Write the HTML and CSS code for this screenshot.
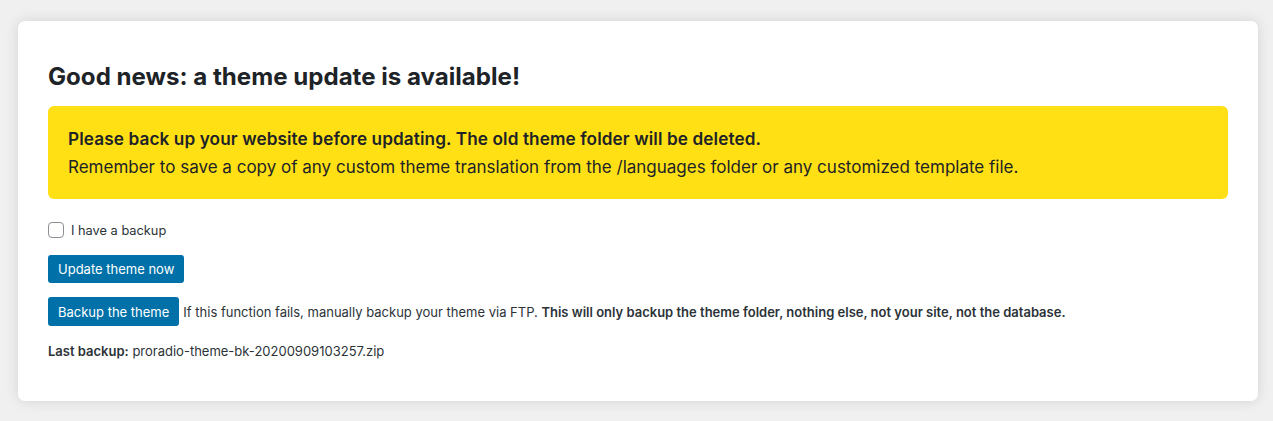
FILE: index.html
```html
<!DOCTYPE html>
<html>
<head>
<meta charset="utf-8">
<link rel="stylesheet" href="styles.css">
</head>
<body>
<div class="card">
  <h2 class="title">Good news: a theme update is available!</h2>
  <div class="notice">
    <strong>Please back up your website before updating. The old theme folder will be deleted.</strong>
    <span>Remember to save a copy of any custom theme translation from the /languages folder or any customized template file.</span>
  </div>
  <label class="check"><span class="box"></span>I have a backup</label>
  <div class="row"><button class="btn">Update theme now</button></div>
  <div class="row"><button class="btn">Backup the theme</button><span class="info">If this function fails, manually backup your theme via FTP. <b>This will only backup the theme folder, nothing else, not your site, not the database.</b></span></div>
  <p class="last"><b>Last backup:</b> proradio-theme-bk-20200909103257.zip</p>
</div>
</body>
</html>
```
FILE: styles.css
```css
html, body { margin: 0; padding: 0; }
body {
  background: #f0f0f0;
  font-family: Inter, "Noto Sans", "Liberation Sans", sans-serif;
  color: #1d2327;
  padding: 21px 15px 20px 18px;
}
.card {
  background: #fff;
  border-radius: 7px;
  box-shadow: 0 0 14px rgba(0,0,0,0.12);
  padding: 0 30px 0 30px;
  height: 380px;
  box-sizing: border-box;
  overflow: hidden;
}
.title {
  margin: 0;
  padding-top: 41px;
  font-size: 24.1px;
  font-weight: 700;
  line-height: 30px;
  letter-spacing: 0;
}
.notice {
  margin-top: 14px;
  background: #ffe014;
  border-radius: 6px;
  padding: 0 20px;
  display: flex;
  flex-direction: column;
  font-size: 17px;
  line-height: 29px;
  height: 93px;
  box-sizing: border-box;
  justify-content: center;
}
.notice strong { font-weight: 600; font-size: 17.2px; letter-spacing: 0.1px; }
.check {
  display: flex;
  align-items: center;
  margin-top: 23px;
  font-size: 12.8px;
  color: #2c3338;
  height: 16px;
}
.box {
  width: 14px; height: 14px;
  border: 1px solid #8c8f94;
  border-radius: 4px;
  margin-right: 7px;
}
.row {
  display: flex;
  align-items: center;
  margin-top: 17px;
}
.row + .row { margin-top: 14px; }
.btn {
  font-family: inherit;
  background: #0071a8;
  color: #fff;
  border: 0;
  border-radius: 3px;
  font-size: 13px;
  height: 28px;
  padding: 0 10px;
  margin: 0;
}
.row + .row .btn { height: 29px; }
.info {
  font-size: 13px;
  color: #2c3338;
  margin-left: 4px;
}
.info b, .last b { font-weight: 600; }
.last {
  margin: 17px 0 0;
  font-size: 13px;
  color: #2c3338;
}
```
